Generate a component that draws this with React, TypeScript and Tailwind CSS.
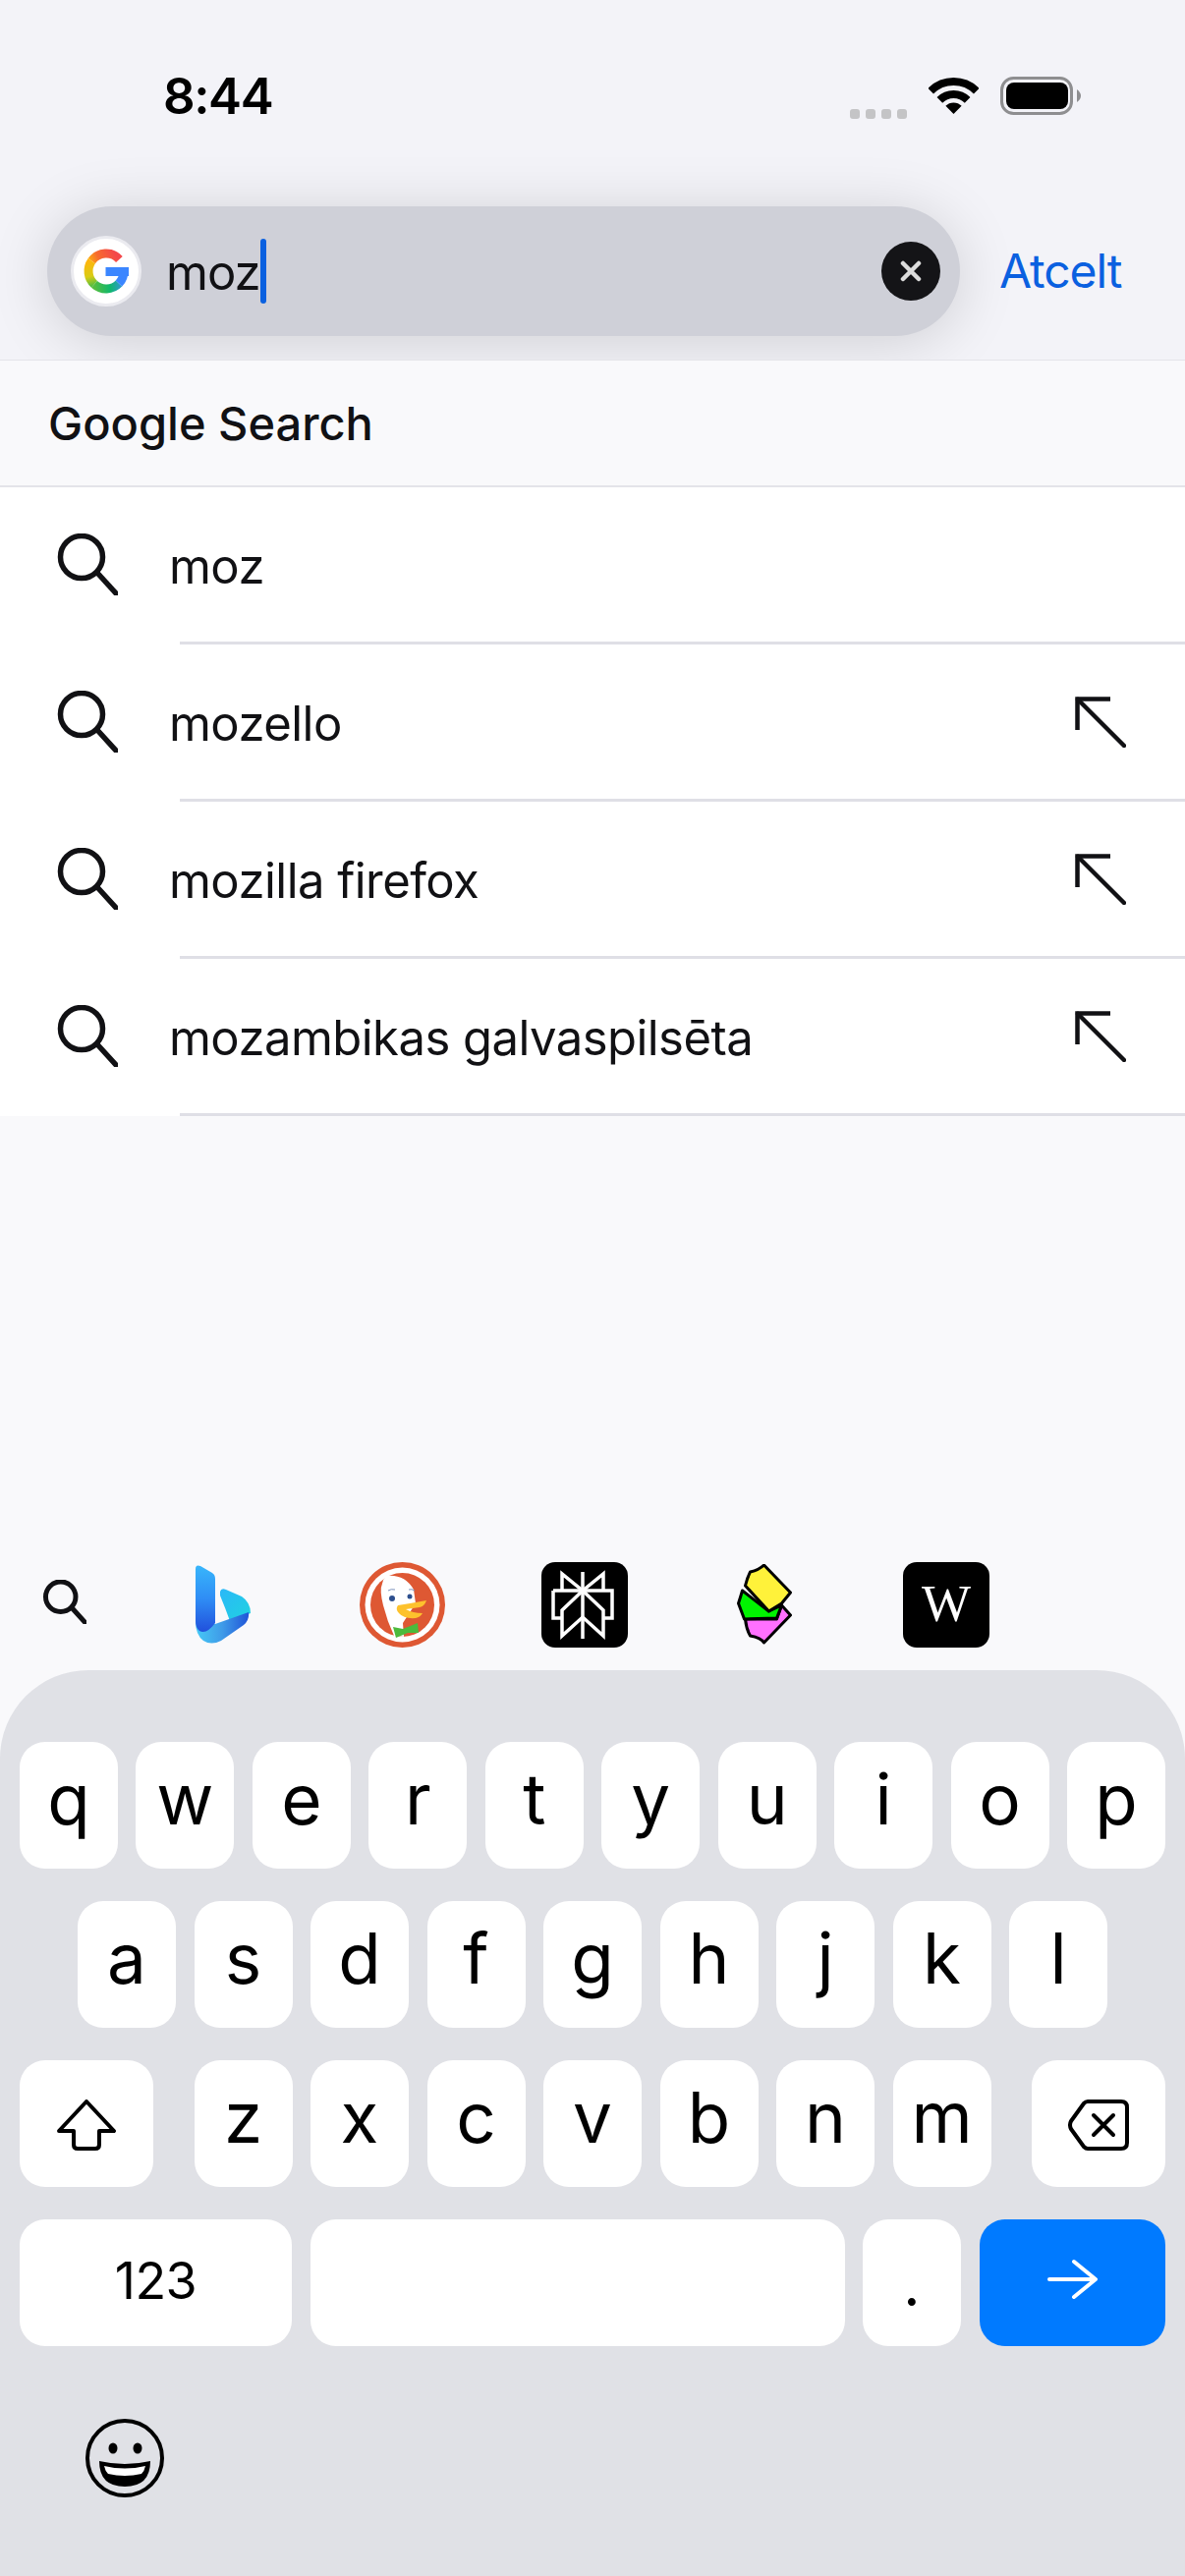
import type { ReactNode } from 'react';

function SearchIcon({ small = false }: { small?: boolean }) {
  return (
    <svg viewBox="0 0 62 63" className={small ? 'w-[44px] h-[45px]' : 'w-[62px] h-[63px]'} fill="none" stroke="#111114" strokeWidth={small ? 7 : 5.5}>
      <circle cx="25" cy="24" r="21.5" />
      <path d="M41 40 L60 61" strokeLinecap="round" />
    </svg>
  );
}

function FillArrow() {
  return (
    <svg viewBox="0 0 52 52" className="w-[52px] h-[52px]" fill="none" stroke="#111114" strokeWidth="4.5">
      <path d="M2.5 34 V2.5 H36" />
      <path d="M3 3 L50 50" strokeLinecap="round" />
    </svg>
  );
}

function GoogleLogo() {
  return (
    <svg viewBox="0 0 48 48" className="w-[48px] h-[48px]" fill="none" strokeWidth="9">
      <defs>
        <linearGradient id="gRed" gradientUnits="userSpaceOnUse" x1="34" y1="8" x2="8" y2="20">
          <stop offset="0" stopColor="#f4474a" />
          <stop offset="0.6" stopColor="#f76b2d" />
          <stop offset="1" stopColor="#fdb60d" />
        </linearGradient>
        <linearGradient id="gYellow" gradientUnits="userSpaceOnUse" x1="8" y1="14" x2="14" y2="38">
          <stop offset="0" stopColor="#fdb60d" />
          <stop offset="0.6" stopColor="#d9cc14" />
          <stop offset="1" stopColor="#55bd3f" />
        </linearGradient>
        <linearGradient id="gGreen" gradientUnits="userSpaceOnUse" x1="12" y1="38" x2="38" y2="36">
          <stop offset="0" stopColor="#55bd3f" />
          <stop offset="0.6" stopColor="#10b86c" />
          <stop offset="1" stopColor="#2c9bc4" />
        </linearGradient>
      </defs>
      <path d="M37.4 12 A18 18 0 0 0 9.3 13.7" stroke="url(#gRed)" />
      <path d="M9.3 13.7 A18 18 0 0 0 12 37.4" stroke="url(#gYellow)" />
      <path d="M12 37.4 A18 18 0 0 0 37 36.5" stroke="url(#gGreen)" />
      <path d="M37 36.5 A18 18 0 0 0 42 24" stroke="#3b86ff" />
      <path d="M23.5 24.5 H47" stroke="#3b86ff" />
    </svg>
  );
}

function BingLogo() {
  return (
    <svg viewBox="0 0 58 84" className="w-[58px] h-[84px] blur-[0.7px]">
      <defs>
        <linearGradient id="bBar" x1="0" y1="0" x2="0" y2="1">
          <stop offset="0" stopColor="#38b6fb" />
          <stop offset="0.5" stopColor="#2f8df5" />
          <stop offset="1" stopColor="#2150dc" />
        </linearGradient>
        <linearGradient id="bBand" x1="0" y1="0" x2="1" y2="0">
          <stop offset="0" stopColor="#46c9f6" />
          <stop offset="0.5" stopColor="#3f9be8" />
          <stop offset="1" stopColor="#1f55d8" />
        </linearGradient>
        <linearGradient id="bBlob" x1="0" y1="0" x2="1" y2="1">
          <stop offset="0" stopColor="#2bb8f8" />
          <stop offset="1" stopColor="#1fd3e0" />
        </linearGradient>
      </defs>
      <path d="M26 28 Q27 24 32 26 L48 33 Q57 39 57 50 L36 58 Q31 44 26 32 Z" fill="url(#bBlob)" />
      <path d="M1 58 Q1 72 9 78 Q17 83 27 78 L50 62 Q56 57 55 49 L21 61 L1 58 Z" fill="url(#bBand)" />
      <path d="M1 5 Q1 0 6 2 L18 9 Q21 11 21 15 V60 Q12 72 5 68 Q1 65 1 58 Z" fill="url(#bBar)" />
    </svg>
  );
}

function DuckLogo() {
  return (
    <svg viewBox="0 0 87 87" className="w-[87px] h-[87px]">
      <circle cx="43.5" cy="43.5" r="43.5" fill="#de5833" />
      <circle cx="43.5" cy="43.5" r="38" fill="#fff" />
      <circle cx="43.5" cy="43.5" r="32.5" fill="#de5833" />
      <path d="M27 14 Q46 12 55 28 L57 42 L44 62 L45 76 L35 75 Q28 60 24 44 Q20 28 23 22 Q24 17 27 14 Z" fill="#fff" />
      <path d="M39 44 Q52 42 68 39 Q66 45 61 46 L47 48 Q54 52 64 52 Q62 56 57 57 Q45 58 40 52 Q36 48 39 44 Z" fill="#fdc22d" />
      <path d="M34 66 L44 68 L59 62 L60 72 L49 72 L37 77 Z" fill="#4cba3c" />
      <circle cx="33" cy="37" r="3" fill="#2d4f8e" />
      <circle cx="51" cy="35" r="2.5" fill="#2d4f8e" />
      <path d="M29 29 Q32 27 36 28 M50 28 Q53 27 56 29" stroke="#7e93bd" strokeWidth="1" fill="none" />
    </svg>
  );
}

function PerplexityLogo() {
  return (
    <div className="w-[88px] h-[87px] rounded-[14px] bg-black flex items-center justify-center">
      <svg viewBox="0 0 88 87" className="w-[88px] h-[87px]" fill="none" stroke="#fff" strokeWidth="3.5">
        <path d="M42 10 V78" />
        <path d="M12 29 H72 V57 H63 M12 29 V57 H21" />
        <path d="M21 29 V12 L42 29 L63 12 V29" />
        <path d="M42 29 L21 49 V75 L42 56 L63 75 V49 L42 29" />
      </svg>
    </div>
  );
}

function ShieldLogo() {
  return (
    <svg viewBox="0 0 55 82" className="w-[56px] h-[82px]" stroke="#000" strokeWidth="3" strokeLinejoin="round">
      <path d="M8 56 H40 L45 42 L54 52 L27 80 Q24 75 13 73 Q9 66 8 56 Z" fill="#ff70ff" />
      <path d="M5 27 L32 48 L45 42 L40 55 L7 56 Q4 48 1 40 Q3 34 5 27 Z" fill="#00f400" />
      <path d="M27 1 L54 29 L45 40 L32 48 L8 22 Q10 14 13 8 Q22 6 27 1 Z" fill="#fff23a" />
    </svg>
  );
}

function Key({ children, className = 'w-[100px]' }: { children?: ReactNode; className?: string }) {
  return (
    <div className={`h-[129px] rounded-[26px] bg-white flex items-center justify-center text-black ${className}`}>
      {children}
    </div>
  );
}

function LetterRow({ letters }: { letters: string[] }) {
  return (
    <>
      {letters.map((letter) => (
        <Key key={letter}>
          <span className="text-[71px] leading-none pb-[12px]">{letter}</span>
        </Key>
      ))}
    </>
  );
}

const suggestions = [
  { text: 'moz', fill: false },
  { text: 'mozello', fill: true },
  { text: 'mozilla firefox', fill: true },
  { text: 'mozambikas galvaspilsēta', fill: true },
];

export default function App() {
  return (
    <div className="w-[1206px] h-[2622px] overflow-hidden flex flex-col bg-[#f9f9fb] font-['Inter',sans-serif] text-[#111114]">
      {/* status bar and search field */}
      <header className="h-[366px] shrink-0 bg-[#f3f3f8] overflow-hidden">
        <div className="mt-[70px] h-[54px] flex items-center justify-between pl-[166px] pr-[106px]">
          <span className="text-[51px] font-semibold text-black tracking-[-1.4px] leading-none">8:44</span>
          <div className="flex items-center">
            <div className="flex gap-[6px] mt-[38px] mr-[22px]">
              <div className="w-[10px] h-[10px] rounded-[3px] bg-[#c4c4c6]" />
              <div className="w-[10px] h-[10px] rounded-[3px] bg-[#c4c4c6]" />
              <div className="w-[10px] h-[10px] rounded-[3px] bg-[#c4c4c6]" />
              <div className="w-[10px] h-[10px] rounded-[3px] bg-[#c4c4c6]" />
            </div>
            <svg viewBox="0 0 51 37" className="w-[51px] h-[37px] mr-[22px]" fill="none" stroke="#000" strokeWidth="8">
              <path d="M2.2 13.7 A33 33 0 0 1 48.8 13.7" />
              <path d="M11.36 22.86 A20 20 0 0 1 39.64 22.86" />
              <path d="M17.37 28.87 A11.5 11.5 0 0 1 33.63 28.87 L25.5 37 Z" fill="#000" stroke="none" />
            </svg>
            <svg viewBox="0 0 82 39" className="w-[82px] h-[39px]">
              <rect x="1.5" y="1.5" width="71" height="36" rx="12" fill="none" stroke="#8e8e90" strokeWidth="3" />
              <rect x="6" y="6" width="63" height="27" rx="8" fill="#000" />
              <path d="M78 13 Q82 16 82 19.5 Q82 23 78 26 Z" fill="#8e8e90" />
            </svg>
          </div>
        </div>
        <div className="mt-[86px] flex items-center pl-[48px]">
          <div className="w-[929px] h-[132px] rounded-[66px] bg-[#cfd0d8] shadow-[0_6px_60px_rgba(0,0,0,0.15)] flex items-center pl-[24px] pr-[20px]">
            <div className="w-[72px] h-[72px] rounded-full bg-white border-[3px] border-[#ebebf0] flex items-center justify-center">
              <GoogleLogo />
            </div>
            <div className="ml-[25px] flex items-center">
              <span className="text-[49px] tracking-[-1px] leading-none pt-[2px]">moz</span>
              <div className="w-[6px] h-[66px] rounded-full bg-[#0a60e0]" />
            </div>
            <div className="ml-auto w-[60px] h-[60px] rounded-full bg-[#141417] flex items-center justify-center">
              <svg viewBox="0 0 22 22" className="w-[22px] h-[22px]" stroke="#dcdcdc" strokeWidth="4.5" strokeLinecap="round">
                <path d="M3 3 L19 19 M19 3 L3 19" />
              </svg>
            </div>
          </div>
          <span className="ml-[40px] text-[48px] text-[#0a60e0] tracking-[-1.1px] leading-none">Atcelt</span>
        </div>
      </header>

      {/* section heading */}
      <div className="h-[130px] shrink-0 border-t border-b-[2px] border-[#e4e4e9] flex items-center pl-[49px] bg-[#f9f9fb]">
        <span className="text-[47px] font-[550] tracking-[0px] leading-none">Google Search</span>
      </div>

      {/* suggestions */}
      <div className="bg-white shrink-0">
        {suggestions.map((row) => (
          <div key={row.text} className="h-[160px] flex flex-col">
            <div className="flex-1 flex items-center pl-[58px] pr-[60px]">
              <SearchIcon />
              <span className="ml-[52px] pt-[3px] text-[49px] tracking-[-0.55px] leading-none">{row.text}</span>
              {row.fill && (
                <div className="ml-auto">
                  <FillArrow />
                </div>
              )}
            </div>
            <div className="ml-[183px] h-[3px] bg-[#dfdfe6]" />
          </div>
        ))}
      </div>

      {/* search engine shortcuts */}
      <div className="flex-1 flex flex-col justify-end">
        <div className="h-[110px] flex items-start pl-[44px]">
          <div className="mt-[18px]">
            <SearchIcon small />
          </div>
          <div className="ml-[110px] mt-[2px]">
            <BingLogo />
          </div>
          <div className="ml-[110px]">
            <DuckLogo />
          </div>
          <div className="ml-[98px]">
            <PerplexityLogo />
          </div>
          <div className="ml-[111px] mt-[2px]">
            <ShieldLogo />
          </div>
          <div className="ml-[113px] w-[88px] h-[87px] rounded-[14px] bg-black flex items-center justify-center">
            <span className="font-['Liberation_Serif',serif] text-[53px] leading-none text-white pb-[3px]">W</span>
          </div>
        </div>
      </div>

      {/* keyboard */}
      <div className="h-[922px] shrink-0 bg-[#e0e1e6] rounded-t-[90px] pt-[73px] flex flex-col">
        <div className="flex flex-col gap-[33px] px-[20px]">
          <div className="flex justify-center gap-[18.5px]">
            <LetterRow letters={['q', 'w', 'e', 'r', 't', 'y', 'u', 'i', 'o', 'p']} />
          </div>
          <div className="flex justify-center gap-[18.5px]">
            <LetterRow letters={['a', 's', 'd', 'f', 'g', 'h', 'j', 'k', 'l']} />
          </div>
          <div className="flex justify-between">
            <Key className="w-[136px]">
              <svg viewBox="0 0 60 52" className="w-[60px] h-[52px] mt-[3px]" fill="none" stroke="#000" strokeWidth="4" strokeLinejoin="round">
                <path d="M30 2 L58 32 H43 V46 Q43 50 39 50 H21 Q17 50 17 46 V32 H2 Z" />
              </svg>
            </Key>
            <div className="flex gap-[18.5px]">
              <LetterRow letters={['z', 'x', 'c', 'v', 'b', 'n', 'm']} />
            </div>
            <Key className="w-[136px]">
              <svg viewBox="0 0 62 52" className="w-[62px] h-[52px] mt-[3px]" fill="none" stroke="#000" strokeWidth="4" strokeLinejoin="round" strokeLinecap="round">
                <path d="M20 2 H54 Q60 2 60 8 V44 Q60 50 54 50 H20 Q18 50 16 48 L3 30 Q1 26 3 22 L16 4 Q18 2 20 2 Z" />
                <path d="M26 16 L46 36 M46 16 L26 36" />
              </svg>
            </Key>
          </div>
          <div className="flex gap-[18.5px]">
            <Key className="w-[277px]">
              <span className="text-[52px] leading-none tracking-[-0.5px] pb-[3px]">123</span>
            </Key>
            <Key className="w-[544px]" />
            <Key className="w-[100px]">
              <span className="text-[60px] leading-none pt-[3px]">.</span>
            </Key>
            <Key className="flex-1 !bg-[#007aff]">
              <svg viewBox="0 0 52 42" className="w-[52px] h-[42px] mb-[8px]" fill="none" stroke="#fff" strokeWidth="4" strokeLinecap="round" strokeLinejoin="round">
                <path d="M3 21 H49 M28 3 L50 21 L28 39" />
              </svg>
            </Key>
          </div>
        </div>
        <div className="mt-[74px] pl-[87px]">
          <svg viewBox="0 0 80 80" className="w-[80px] h-[80px]">
            <circle cx="40" cy="40" r="38" fill="none" stroke="#000" strokeWidth="4" />
            <ellipse cx="28" cy="30" rx="4.5" ry="5.5" fill="#000" />
            <ellipse cx="53" cy="30" rx="4.5" ry="5.5" fill="#000" />
            <path d="M14 43 Q40 49 66 43 Q66 69 40 69 Q14 69 14 43 Z" fill="#000" />
            <path d="M19 48 Q40 53 61 48 Q60 53 57 56 Q40 60 23 56 Q20 53 19 48 Z" fill="#fff" />
          </svg>
        </div>
      </div>
    </div>
  );
}
